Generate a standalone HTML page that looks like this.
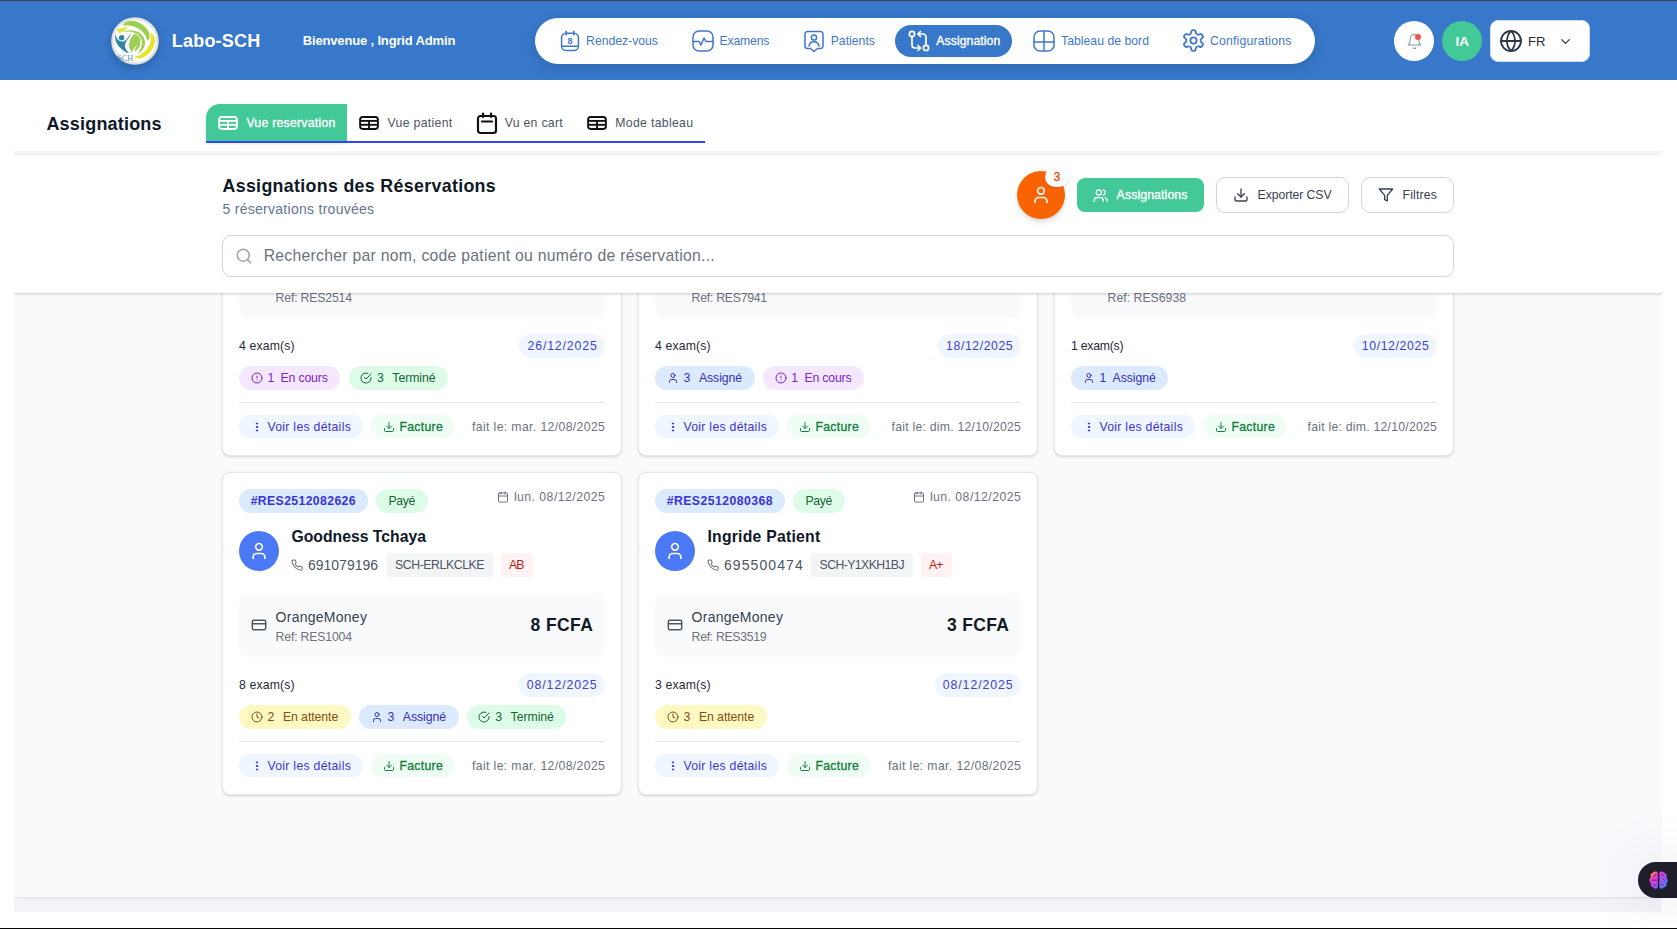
<!DOCTYPE html>
<html lang="fr"><head><meta charset="utf-8"><title>Labo-SCH - Assignations</title>
<style>
html,body{margin:0;padding:0;}
body{width:1677px;height:929px;overflow:hidden;position:relative;background:#fff;font-family:"Liberation Sans", sans-serif;}
.a{position:absolute;display:block;}
.t{position:absolute;white-space:pre;line-height:1;font-family:"Liberation Sans", sans-serif;}
</style></head><body>
<div class="a" style="left:14px;top:151px;width:1648px;height:761px;background:#f3f4f8;"></div>
<div class="a" style="left:14px;top:155px;width:1648px;height:742px;background:#f8fafc;box-shadow:0 2px 3px -2px rgba(0,0,0,.18);"></div>
<div class="a" style="left:0;top:0;width:1677px;height:929px;clip-path:inset(151px 15px 32px 14px)">
<div class="a" style="left:222px;top:133px;width:400px;height:323px;background:#fff;border-radius:8px;border:1px solid #e5e7eb;box-sizing:border-box;box-shadow:0 1px 3px rgba(0,0,0,.10), 0 1px 2px rgba(0,0,0,.06);"></div>
<div class="a" style="left:239.1px;top:254.0px;width:365.8px;height:63.8px;background:#f9fafb;border-radius:10px;"></div>
<span class="t" style="left:275.60px;top:292.00px;font-size:12.25px;color:#6b7280;letter-spacing:-0.174px;">Ref: RES2514</span>
<span class="t" style="left:239.10px;top:340.00px;font-size:12.25px;color:#1f2937;letter-spacing:0.116px;">4 exam(s)</span>
<div class="a" style="left:519.3px;top:334.1px;width:85.6px;height:23.6px;background:#eff6ff;border-radius:12px;"></div>
<span class="t" style="left:527.50px;top:340.00px;font-size:12.25px;color:#3b3fd8;letter-spacing:0.876px;">26/12/2025</span>
<div class="a" style="left:239.1px;top:366.1px;width:101.3px;height:23.6px;background:#f3e8ff;border-radius:12px;"></div>
<svg class="a" style="left:250.7px;top:371.90000000000003px;" width="12" height="12" viewBox="0 0 24 24" fill="none" stroke="#7e22ce" stroke-width="2" stroke-linecap="round" stroke-linejoin="round"><circle cx="12" cy="12" r="10"/><line x1="12" x2="12" y1="8" y2="12"/><line x1="12" x2="12.01" y1="16" y2="16"/></svg>
<span class="t" style="left:267.50px;top:372.00px;font-size:12.25px;color:#7e22ce;">1</span>
<span class="t" style="left:280.60px;top:372.00px;font-size:12.25px;color:#7e22ce;letter-spacing:-0.163px;">En cours</span>
<div class="a" style="left:348.5px;top:366.1px;width:99.69999999999999px;height:23.6px;background:#dcfce7;border-radius:12px;"></div>
<svg class="a" style="left:360.1px;top:371.90000000000003px;" width="12" height="12" viewBox="0 0 24 24" fill="none" stroke="#166534" stroke-width="2" stroke-linecap="round" stroke-linejoin="round"><path d="M22 11.08V12a10 10 0 1 1-5.93-9.14"/><polyline points="22 4 12 14.01 9 11.01"/></svg>
<span class="t" style="left:376.90px;top:372.00px;font-size:12.25px;color:#166534;">3</span>
<span class="t" style="left:392.30px;top:372.00px;font-size:12.25px;color:#166534;letter-spacing:-0.046px;">Terminé</span>
<div class="a" style="left:239.1px;top:401.90000000000003px;width:365.8px;height:1px;background:#e5e7eb;"></div>
<div class="a" style="left:239.1px;top:414.90000000000003px;width:123.9px;height:23.6px;background:#eff6ff;border-radius:12px;"></div>
<svg class="a" style="left:250.7px;top:420.7px;" width="12" height="12" viewBox="0 0 24 24" fill="#3b35d6" stroke="#3b35d6" stroke-width="2" stroke-linecap="round" stroke-linejoin="round"><circle cx="12" cy="5" r="1.3"/><circle cx="12" cy="12" r="1.3"/><circle cx="12" cy="19" r="1.3"/></svg>
<span class="t" style="left:267.40px;top:421.00px;font-size:12.25px;color:#3b35d6;letter-spacing:0.293px;">Voir les détails</span>
<div class="a" style="left:371.3px;top:414.90000000000003px;width:83.9px;height:23.6px;background:#f0fdf4;border-radius:12px;"></div>
<svg class="a" style="left:383.4px;top:420.7px;" width="12" height="12" viewBox="0 0 24 24" fill="none" stroke="#15803d" stroke-width="2" stroke-linecap="round" stroke-linejoin="round"><path d="M21 15v4a2 2 0 0 1-2 2H5a2 2 0 0 1-2-2v-4"/><polyline points="7 10 12 15 17 10"/><line x1="12" x2="12" y1="15" y2="3"/></svg>
<span class="t" style="left:399.40px;top:421.00px;font-size:12.25px;color:#15803d;-webkit-text-stroke:0.35px;letter-spacing:0.295px;">Facture</span>
<span class="t" style="left:472.10px;top:421.00px;font-size:12.25px;color:#6b7280;letter-spacing:0.355px;">fait le: mar. 12/08/2025</span>
<div class="a" style="left:638px;top:133px;width:400px;height:323px;background:#fff;border-radius:8px;border:1px solid #e5e7eb;box-sizing:border-box;box-shadow:0 1px 3px rgba(0,0,0,.10), 0 1px 2px rgba(0,0,0,.06);"></div>
<div class="a" style="left:655.1px;top:254.0px;width:365.8px;height:63.8px;background:#f9fafb;border-radius:10px;"></div>
<span class="t" style="left:691.60px;top:292.00px;font-size:12.25px;color:#6b7280;letter-spacing:-0.247px;">Ref: RES7941</span>
<span class="t" style="left:655.10px;top:340.00px;font-size:12.25px;color:#1f2937;letter-spacing:0.116px;">4 exam(s)</span>
<div class="a" style="left:937.9px;top:334.1px;width:83.0px;height:23.6px;background:#eff6ff;border-radius:12px;"></div>
<span class="t" style="left:946.10px;top:340.00px;font-size:12.25px;color:#3b3fd8;letter-spacing:0.587px;">18/12/2025</span>
<div class="a" style="left:655.1px;top:366.1px;width:99.69999999999999px;height:23.6px;background:#dbeafe;border-radius:12px;"></div>
<svg class="a" style="left:666.7px;top:371.90000000000003px;" width="12" height="12" viewBox="0 0 24 24" fill="none" stroke="#3730b8" stroke-width="2" stroke-linecap="round" stroke-linejoin="round"><path d="M19 21v-2a4 4 0 0 0-4-4H9a4 4 0 0 0-4 4v2"/><circle cx="12" cy="7" r="4"/></svg>
<span class="t" style="left:683.50px;top:372.00px;font-size:12.25px;color:#3730b8;">3</span>
<span class="t" style="left:698.90px;top:372.00px;font-size:12.25px;color:#3730b8;letter-spacing:-0.049px;">Assigné</span>
<div class="a" style="left:762.9px;top:366.1px;width:101.3px;height:23.6px;background:#f3e8ff;border-radius:12px;"></div>
<svg class="a" style="left:774.5px;top:371.90000000000003px;" width="12" height="12" viewBox="0 0 24 24" fill="none" stroke="#7e22ce" stroke-width="2" stroke-linecap="round" stroke-linejoin="round"><circle cx="12" cy="12" r="10"/><line x1="12" x2="12" y1="8" y2="12"/><line x1="12" x2="12.01" y1="16" y2="16"/></svg>
<span class="t" style="left:791.30px;top:372.00px;font-size:12.25px;color:#7e22ce;">1</span>
<span class="t" style="left:804.40px;top:372.00px;font-size:12.25px;color:#7e22ce;letter-spacing:-0.163px;">En cours</span>
<div class="a" style="left:655.1px;top:401.90000000000003px;width:365.8px;height:1px;background:#e5e7eb;"></div>
<div class="a" style="left:655.1px;top:414.90000000000003px;width:123.9px;height:23.6px;background:#eff6ff;border-radius:12px;"></div>
<svg class="a" style="left:666.7px;top:420.7px;" width="12" height="12" viewBox="0 0 24 24" fill="#3b35d6" stroke="#3b35d6" stroke-width="2" stroke-linecap="round" stroke-linejoin="round"><circle cx="12" cy="5" r="1.3"/><circle cx="12" cy="12" r="1.3"/><circle cx="12" cy="19" r="1.3"/></svg>
<span class="t" style="left:683.40px;top:421.00px;font-size:12.25px;color:#3b35d6;letter-spacing:0.293px;">Voir les détails</span>
<div class="a" style="left:787.3px;top:414.90000000000003px;width:83.9px;height:23.6px;background:#f0fdf4;border-radius:12px;"></div>
<svg class="a" style="left:799.4px;top:420.7px;" width="12" height="12" viewBox="0 0 24 24" fill="none" stroke="#15803d" stroke-width="2" stroke-linecap="round" stroke-linejoin="round"><path d="M21 15v4a2 2 0 0 1-2 2H5a2 2 0 0 1-2-2v-4"/><polyline points="7 10 12 15 17 10"/><line x1="12" x2="12" y1="15" y2="3"/></svg>
<span class="t" style="left:815.40px;top:421.00px;font-size:12.25px;color:#15803d;-webkit-text-stroke:0.35px;letter-spacing:0.295px;">Facture</span>
<span class="t" style="left:891.50px;top:421.00px;font-size:12.25px;color:#6b7280;letter-spacing:0.237px;">fait le: dim. 12/10/2025</span>
<div class="a" style="left:1054px;top:133px;width:400px;height:323px;background:#fff;border-radius:8px;border:1px solid #e5e7eb;box-sizing:border-box;box-shadow:0 1px 3px rgba(0,0,0,.10), 0 1px 2px rgba(0,0,0,.06);"></div>
<div class="a" style="left:1071.1px;top:254.0px;width:365.8px;height:63.8px;background:#f9fafb;border-radius:10px;"></div>
<span class="t" style="left:1107.60px;top:292.00px;font-size:12.25px;color:#6b7280;letter-spacing:0.017px;">Ref: RES6938</span>
<span class="t" style="left:1071.10px;top:340.00px;font-size:12.25px;color:#1f2937;letter-spacing:-0.259px;">1 exam(s)</span>
<div class="a" style="left:1353.6px;top:334.1px;width:83.30000000000001px;height:23.6px;background:#eff6ff;border-radius:12px;"></div>
<span class="t" style="left:1361.80px;top:340.00px;font-size:12.25px;color:#3b3fd8;letter-spacing:0.621px;">10/12/2025</span>
<div class="a" style="left:1071.1px;top:366.1px;width:97.39999999999999px;height:23.6px;background:#dbeafe;border-radius:12px;"></div>
<svg class="a" style="left:1082.6999999999998px;top:371.90000000000003px;" width="12" height="12" viewBox="0 0 24 24" fill="none" stroke="#3730b8" stroke-width="2" stroke-linecap="round" stroke-linejoin="round"><path d="M19 21v-2a4 4 0 0 0-4-4H9a4 4 0 0 0-4 4v2"/><circle cx="12" cy="7" r="4"/></svg>
<span class="t" style="left:1099.50px;top:372.00px;font-size:12.25px;color:#3730b8;">1</span>
<span class="t" style="left:1112.60px;top:372.00px;font-size:12.25px;color:#3730b8;letter-spacing:-0.049px;">Assigné</span>
<div class="a" style="left:1071.1px;top:401.90000000000003px;width:365.8px;height:1px;background:#e5e7eb;"></div>
<div class="a" style="left:1071.1px;top:414.90000000000003px;width:123.9px;height:23.6px;background:#eff6ff;border-radius:12px;"></div>
<svg class="a" style="left:1082.7px;top:420.7px;" width="12" height="12" viewBox="0 0 24 24" fill="#3b35d6" stroke="#3b35d6" stroke-width="2" stroke-linecap="round" stroke-linejoin="round"><circle cx="12" cy="5" r="1.3"/><circle cx="12" cy="12" r="1.3"/><circle cx="12" cy="19" r="1.3"/></svg>
<span class="t" style="left:1099.40px;top:421.00px;font-size:12.25px;color:#3b35d6;letter-spacing:0.293px;">Voir les détails</span>
<div class="a" style="left:1203.3px;top:414.90000000000003px;width:83.9px;height:23.6px;background:#f0fdf4;border-radius:12px;"></div>
<svg class="a" style="left:1215.4px;top:420.7px;" width="12" height="12" viewBox="0 0 24 24" fill="none" stroke="#15803d" stroke-width="2" stroke-linecap="round" stroke-linejoin="round"><path d="M21 15v4a2 2 0 0 1-2 2H5a2 2 0 0 1-2-2v-4"/><polyline points="7 10 12 15 17 10"/><line x1="12" x2="12" y1="15" y2="3"/></svg>
<span class="t" style="left:1231.40px;top:421.00px;font-size:12.25px;color:#15803d;-webkit-text-stroke:0.35px;letter-spacing:0.295px;">Facture</span>
<span class="t" style="left:1307.50px;top:421.00px;font-size:12.25px;color:#6b7280;letter-spacing:0.237px;">fait le: dim. 12/10/2025</span>
<div class="a" style="left:222px;top:472px;width:400px;height:323px;background:#fff;border-radius:8px;border:1px solid #e5e7eb;box-sizing:border-box;box-shadow:0 1px 3px rgba(0,0,0,.10), 0 1px 2px rgba(0,0,0,.06);"></div>
<div class="a" style="left:238.9px;top:489.0px;width:129.1px;height:23.9px;background:#dbeafe;border-radius:12px;"></div>
<span class="t" style="left:250.70px;top:495.00px;font-size:12.25px;color:#3b33d6;font-weight:700;letter-spacing:0.366px;">#RES2512082626</span>
<div class="a" style="left:375.9px;top:489.0px;width:52.2px;height:23.9px;background:#dcfce7;border-radius:12px;"></div>
<span class="t" style="left:388.40px;top:495.00px;font-size:12.25px;color:#166534;letter-spacing:-0.341px;">Payé</span>
<svg class="a" style="left:496.9px;top:490.7px;" width="12" height="12" viewBox="0 0 24 24" fill="none" stroke="#6b7280" stroke-width="2" stroke-linecap="round" stroke-linejoin="round"><rect width="18" height="18" x="3" y="4" rx="2" ry="2"/><line x1="16" x2="16" y1="2" y2="6"/><line x1="8" x2="8" y1="2" y2="6"/><line x1="3" x2="21" y1="10" y2="10"/></svg>
<span class="t" style="left:513.90px;top:491.00px;font-size:12.25px;color:#6b7280;letter-spacing:0.459px;">lun. 08/12/2025</span>
<div class="a" style="left:238.9px;top:530.9px;width:40.2px;height:40.2px;background:#4b78f5;border-radius:20.1px;"></div>
<svg class="a" style="left:249.1px;top:541.0px;" width="20" height="20" viewBox="0 0 24 24" fill="none" stroke="#fff" stroke-width="2" stroke-linecap="round" stroke-linejoin="round"><path d="M19 21v-2a4 4 0 0 0-4-4H9a4 4 0 0 0-4 4v2"/><circle cx="12" cy="7" r="4"/></svg>
<span class="t" style="left:291.40px;top:529.00px;font-size:15.75px;color:#111827;font-weight:700;letter-spacing:0.007px;">Goodness Tchaya</span>
<svg class="a" style="left:291.0px;top:558.8px;" width="12.2" height="12.2" viewBox="0 0 24 24" fill="none" stroke="#6b7280" stroke-width="2" stroke-linecap="round" stroke-linejoin="round"><path d="M22 16.92v3a2 2 0 0 1-2.18 2 19.79 19.79 0 0 1-8.63-3.07 19.5 19.5 0 0 1-6-6 19.79 19.79 0 0 1-3.07-8.67A2 2 0 0 1 4.11 2h3a2 2 0 0 1 2 1.72 12.84 12.84 0 0 0 .7 2.81 2 2 0 0 1-.45 2.11L8.09 9.91a16 16 0 0 0 6 6l1.27-1.27a2 2 0 0 1 2.11-.45 12.84 12.84 0 0 0 2.81.7A2 2 0 0 1 22 16.92z"/></svg>
<span class="t" style="left:307.90px;top:558.00px;font-size:14px;color:#4b5563;letter-spacing:0.015px;">691079196</span>
<div class="a" style="left:386.7px;top:553.0px;width:106.7px;height:24px;background:#f3f4f6;border-radius:4px;"></div>
<span class="t" style="left:395.00px;top:559.00px;font-size:12.25px;color:#4b5563;letter-spacing:-0.405px;">SCH-ERLKCLKE</span>
<div class="a" style="left:501.09999999999997px;top:553.0px;width:31.6px;height:24px;background:#fef2f2;border-radius:4px;"></div>
<span class="t" style="left:508.90px;top:559.00px;font-size:12.25px;color:#b91c1c;letter-spacing:-0.844px;">AB</span>
<div class="a" style="left:239.1px;top:593.0px;width:365.8px;height:63.8px;background:#f9fafb;border-radius:10px;"></div>
<svg class="a" style="left:250.9px;top:616.7px;" width="16" height="16" viewBox="0 0 24 24" fill="none" stroke="#4b5563" stroke-width="2.2" stroke-linecap="round" stroke-linejoin="round"><rect width="20" height="14" x="2" y="5" rx="2"/><line x1="2" x2="22" y1="10" y2="10"/></svg>
<span class="t" style="left:275.60px;top:610.00px;font-size:14px;color:#374151;letter-spacing:0.258px;">OrangeMoney</span>
<span class="t" style="left:530.60px;top:617.00px;font-size:17.5px;color:#111827;font-weight:700;letter-spacing:0.381px;">8 FCFA</span>
<span class="t" style="left:275.60px;top:631.00px;font-size:12.25px;color:#6b7280;letter-spacing:-0.174px;">Ref: RES1004</span>
<span class="t" style="left:239.10px;top:679.00px;font-size:12.25px;color:#1f2937;letter-spacing:0.116px;">8 exam(s)</span>
<div class="a" style="left:518.5px;top:673.1px;width:86.4px;height:23.6px;background:#eff6ff;border-radius:12px;"></div>
<span class="t" style="left:526.70px;top:679.00px;font-size:12.25px;color:#3b3fd8;letter-spacing:0.965px;">08/12/2025</span>
<div class="a" style="left:239.1px;top:705.1px;width:111.79999999999998px;height:23.6px;background:#fef9c3;border-radius:12px;"></div>
<svg class="a" style="left:250.7px;top:710.9px;" width="12" height="12" viewBox="0 0 24 24" fill="none" stroke="#854d0e" stroke-width="2" stroke-linecap="round" stroke-linejoin="round"><circle cx="12" cy="12" r="10"/><polyline points="12 6 12 12 16 14"/></svg>
<span class="t" style="left:267.50px;top:711.00px;font-size:12.25px;color:#854d0e;">2</span>
<span class="t" style="left:282.90px;top:711.00px;font-size:12.25px;color:#854d0e;letter-spacing:-0.051px;">En attente</span>
<div class="a" style="left:359.0px;top:705.1px;width:99.69999999999999px;height:23.6px;background:#dbeafe;border-radius:12px;"></div>
<svg class="a" style="left:370.6px;top:710.9px;" width="12" height="12" viewBox="0 0 24 24" fill="none" stroke="#3730b8" stroke-width="2" stroke-linecap="round" stroke-linejoin="round"><path d="M19 21v-2a4 4 0 0 0-4-4H9a4 4 0 0 0-4 4v2"/><circle cx="12" cy="7" r="4"/></svg>
<span class="t" style="left:387.40px;top:711.00px;font-size:12.25px;color:#3730b8;">3</span>
<span class="t" style="left:402.80px;top:711.00px;font-size:12.25px;color:#3730b8;letter-spacing:-0.049px;">Assigné</span>
<div class="a" style="left:466.8px;top:705.1px;width:99.69999999999999px;height:23.6px;background:#dcfce7;border-radius:12px;"></div>
<svg class="a" style="left:478.40000000000003px;top:710.9px;" width="12" height="12" viewBox="0 0 24 24" fill="none" stroke="#166534" stroke-width="2" stroke-linecap="round" stroke-linejoin="round"><path d="M22 11.08V12a10 10 0 1 1-5.93-9.14"/><polyline points="22 4 12 14.01 9 11.01"/></svg>
<span class="t" style="left:495.20px;top:711.00px;font-size:12.25px;color:#166534;">3</span>
<span class="t" style="left:510.60px;top:711.00px;font-size:12.25px;color:#166534;letter-spacing:-0.046px;">Terminé</span>
<div class="a" style="left:239.1px;top:740.9000000000001px;width:365.8px;height:1px;background:#e5e7eb;"></div>
<div class="a" style="left:239.1px;top:753.9000000000001px;width:123.9px;height:23.6px;background:#eff6ff;border-radius:12px;"></div>
<svg class="a" style="left:250.7px;top:759.7px;" width="12" height="12" viewBox="0 0 24 24" fill="#3b35d6" stroke="#3b35d6" stroke-width="2" stroke-linecap="round" stroke-linejoin="round"><circle cx="12" cy="5" r="1.3"/><circle cx="12" cy="12" r="1.3"/><circle cx="12" cy="19" r="1.3"/></svg>
<span class="t" style="left:267.40px;top:760.00px;font-size:12.25px;color:#3b35d6;letter-spacing:0.293px;">Voir les détails</span>
<div class="a" style="left:371.3px;top:753.9000000000001px;width:83.9px;height:23.6px;background:#f0fdf4;border-radius:12px;"></div>
<svg class="a" style="left:383.4px;top:759.7px;" width="12" height="12" viewBox="0 0 24 24" fill="none" stroke="#15803d" stroke-width="2" stroke-linecap="round" stroke-linejoin="round"><path d="M21 15v4a2 2 0 0 1-2 2H5a2 2 0 0 1-2-2v-4"/><polyline points="7 10 12 15 17 10"/><line x1="12" x2="12" y1="15" y2="3"/></svg>
<span class="t" style="left:399.40px;top:760.00px;font-size:12.25px;color:#15803d;-webkit-text-stroke:0.35px;letter-spacing:0.295px;">Facture</span>
<span class="t" style="left:472.10px;top:760.00px;font-size:12.25px;color:#6b7280;letter-spacing:0.355px;">fait le: mar. 12/08/2025</span>
<div class="a" style="left:638px;top:472px;width:400px;height:323px;background:#fff;border-radius:8px;border:1px solid #e5e7eb;box-sizing:border-box;box-shadow:0 1px 3px rgba(0,0,0,.10), 0 1px 2px rgba(0,0,0,.06);"></div>
<div class="a" style="left:654.9px;top:489.0px;width:130.2px;height:23.9px;background:#dbeafe;border-radius:12px;"></div>
<span class="t" style="left:666.70px;top:495.00px;font-size:12.25px;color:#3b33d6;font-weight:700;letter-spacing:0.451px;">#RES2512080368</span>
<div class="a" style="left:793.0px;top:489.0px;width:52.2px;height:23.9px;background:#dcfce7;border-radius:12px;"></div>
<span class="t" style="left:805.50px;top:495.00px;font-size:12.25px;color:#166534;letter-spacing:-0.341px;">Payé</span>
<svg class="a" style="left:912.9px;top:490.7px;" width="12" height="12" viewBox="0 0 24 24" fill="none" stroke="#6b7280" stroke-width="2" stroke-linecap="round" stroke-linejoin="round"><rect width="18" height="18" x="3" y="4" rx="2" ry="2"/><line x1="16" x2="16" y1="2" y2="6"/><line x1="8" x2="8" y1="2" y2="6"/><line x1="3" x2="21" y1="10" y2="10"/></svg>
<span class="t" style="left:929.90px;top:491.00px;font-size:12.25px;color:#6b7280;letter-spacing:0.459px;">lun. 08/12/2025</span>
<div class="a" style="left:654.9px;top:530.9px;width:40.2px;height:40.2px;background:#4b78f5;border-radius:20.1px;"></div>
<svg class="a" style="left:665.1px;top:541.0px;" width="20" height="20" viewBox="0 0 24 24" fill="none" stroke="#fff" stroke-width="2" stroke-linecap="round" stroke-linejoin="round"><path d="M19 21v-2a4 4 0 0 0-4-4H9a4 4 0 0 0-4 4v2"/><circle cx="12" cy="7" r="4"/></svg>
<span class="t" style="left:707.40px;top:529.00px;font-size:15.75px;color:#111827;font-weight:700;letter-spacing:0.244px;">Ingride Patient</span>
<svg class="a" style="left:707.0px;top:558.8px;" width="12.2" height="12.2" viewBox="0 0 24 24" fill="none" stroke="#6b7280" stroke-width="2" stroke-linecap="round" stroke-linejoin="round"><path d="M22 16.92v3a2 2 0 0 1-2.18 2 19.79 19.79 0 0 1-8.63-3.07 19.5 19.5 0 0 1-6-6 19.79 19.79 0 0 1-3.07-8.67A2 2 0 0 1 4.11 2h3a2 2 0 0 1 2 1.72 12.84 12.84 0 0 0 .7 2.81 2 2 0 0 1-.45 2.11L8.09 9.91a16 16 0 0 0 6 6l1.27-1.27a2 2 0 0 1 2.11-.45 12.84 12.84 0 0 0 2.81.7A2 2 0 0 1 22 16.92z"/></svg>
<span class="t" style="left:723.90px;top:558.00px;font-size:14px;color:#4b5563;letter-spacing:1.090px;">695500474</span>
<div class="a" style="left:811.3px;top:553.0px;width:102.2px;height:24px;background:#f3f4f6;border-radius:4px;"></div>
<span class="t" style="left:819.60px;top:559.00px;font-size:12.25px;color:#4b5563;letter-spacing:-0.567px;">SCH-Y1XKH1BJ</span>
<div class="a" style="left:921.2px;top:553.0px;width:30.6px;height:24px;background:#fef2f2;border-radius:4px;"></div>
<span class="t" style="left:929.00px;top:559.00px;font-size:12.25px;color:#b91c1c;letter-spacing:-0.828px;">A+</span>
<div class="a" style="left:655.1px;top:593.0px;width:365.8px;height:63.8px;background:#f9fafb;border-radius:10px;"></div>
<svg class="a" style="left:666.9px;top:616.7px;" width="16" height="16" viewBox="0 0 24 24" fill="none" stroke="#4b5563" stroke-width="2.2" stroke-linecap="round" stroke-linejoin="round"><rect width="20" height="14" x="2" y="5" rx="2"/><line x1="2" x2="22" y1="10" y2="10"/></svg>
<span class="t" style="left:691.60px;top:610.00px;font-size:14px;color:#374151;letter-spacing:0.258px;">OrangeMoney</span>
<span class="t" style="left:947.10px;top:617.00px;font-size:17.5px;color:#111827;font-weight:700;letter-spacing:0.281px;">3 FCFA</span>
<span class="t" style="left:691.60px;top:631.00px;font-size:12.25px;color:#6b7280;letter-spacing:-0.301px;">Ref: RES3519</span>
<span class="t" style="left:655.10px;top:679.00px;font-size:12.25px;color:#1f2937;letter-spacing:0.141px;">3 exam(s)</span>
<div class="a" style="left:934.5px;top:673.1px;width:86.4px;height:23.6px;background:#eff6ff;border-radius:12px;"></div>
<span class="t" style="left:942.70px;top:679.00px;font-size:12.25px;color:#3b3fd8;letter-spacing:0.965px;">08/12/2025</span>
<div class="a" style="left:655.1px;top:705.1px;width:111.79999999999998px;height:23.6px;background:#fef9c3;border-radius:12px;"></div>
<svg class="a" style="left:666.7px;top:710.9px;" width="12" height="12" viewBox="0 0 24 24" fill="none" stroke="#854d0e" stroke-width="2" stroke-linecap="round" stroke-linejoin="round"><circle cx="12" cy="12" r="10"/><polyline points="12 6 12 12 16 14"/></svg>
<span class="t" style="left:683.50px;top:711.00px;font-size:12.25px;color:#854d0e;">3</span>
<span class="t" style="left:698.90px;top:711.00px;font-size:12.25px;color:#854d0e;letter-spacing:-0.051px;">En attente</span>
<div class="a" style="left:655.1px;top:740.9000000000001px;width:365.8px;height:1px;background:#e5e7eb;"></div>
<div class="a" style="left:655.1px;top:753.9000000000001px;width:123.9px;height:23.6px;background:#eff6ff;border-radius:12px;"></div>
<svg class="a" style="left:666.7px;top:759.7px;" width="12" height="12" viewBox="0 0 24 24" fill="#3b35d6" stroke="#3b35d6" stroke-width="2" stroke-linecap="round" stroke-linejoin="round"><circle cx="12" cy="5" r="1.3"/><circle cx="12" cy="12" r="1.3"/><circle cx="12" cy="19" r="1.3"/></svg>
<span class="t" style="left:683.40px;top:760.00px;font-size:12.25px;color:#3b35d6;letter-spacing:0.293px;">Voir les détails</span>
<div class="a" style="left:787.3px;top:753.9000000000001px;width:83.9px;height:23.6px;background:#f0fdf4;border-radius:12px;"></div>
<svg class="a" style="left:799.4px;top:759.7px;" width="12" height="12" viewBox="0 0 24 24" fill="none" stroke="#15803d" stroke-width="2" stroke-linecap="round" stroke-linejoin="round"><path d="M21 15v4a2 2 0 0 1-2 2H5a2 2 0 0 1-2-2v-4"/><polyline points="7 10 12 15 17 10"/><line x1="12" x2="12" y1="15" y2="3"/></svg>
<span class="t" style="left:815.40px;top:760.00px;font-size:12.25px;color:#15803d;-webkit-text-stroke:0.35px;letter-spacing:0.295px;">Facture</span>
<span class="t" style="left:888.10px;top:760.00px;font-size:12.25px;color:#6b7280;letter-spacing:0.355px;">fait le: mar. 12/08/2025</span>
<div class="a" style="left:14px;top:151px;width:1648px;height:4px;background:#f3f4f8;"></div>
<div class="a" style="left:14px;top:155px;width:1648px;height:138px;background:#fff;box-shadow:0 1px 3px rgba(0,0,0,.13), 0 1px 2px rgba(0,0,0,.06);"></div>
<span class="t" style="left:222.50px;top:178.00px;font-size:17.8px;color:#111827;font-weight:700;letter-spacing:0.334px;">Assignations des Réservations</span>
<span class="t" style="left:222.50px;top:202.00px;font-size:14px;color:#64748b;letter-spacing:0.276px;">5 réservations trouvées</span>
<div class="a" style="left:1017px;top:171px;width:48px;height:48px;background:#fa6400;border-radius:24px;box-shadow:0 4px 6px -1px rgba(0,0,0,.13), 0 2px 4px -2px rgba(0,0,0,.10);"></div>
<svg class="a" style="left:1031px;top:185px;" width="20" height="20" viewBox="0 0 24 24" fill="none" stroke="#fff" stroke-width="2" stroke-linecap="round" stroke-linejoin="round"><path d="M19 21v-2a4 4 0 0 0-4-4H9a4 4 0 0 0-4 4v2"/><circle cx="12" cy="7" r="4"/></svg>
<div class="a" style="left:1045px;top:166.6px;width:24.2px;height:20.4px;background:#fff;border-radius:10.2px;box-shadow:0 1px 3px rgba(0,0,0,.15);"></div>
<span class="t" style="left:1053.49px;top:171.00px;font-size:12.25px;color:#e8500f;-webkit-text-stroke:0.35px;">3</span>
<div class="a" style="left:1077px;top:178px;width:127px;height:34px;background:#43c998;border-radius:8px;"></div>
<svg class="a" style="left:1092.9px;top:187.5px;" width="15.5" height="15.5" viewBox="0 0 24 24" fill="none" stroke="#fff" stroke-width="2" stroke-linecap="round" stroke-linejoin="round"><path d="M16 21v-2a4 4 0 0 0-4-4H6a4 4 0 0 0-4 4v2"/><circle cx="9" cy="7" r="4"/><path d="M22 21v-2a4 4 0 0 0-3-3.87"/><path d="M16 3.13a4 4 0 0 1 0 7.75"/></svg>
<span class="t" style="left:1116.60px;top:189.00px;font-size:12.25px;color:#fff;-webkit-text-stroke:0.35px;letter-spacing:0.121px;">Assignations</span>
<div class="a" style="left:1216px;top:177px;width:132.6px;height:36px;background:#fff;border-radius:9px;border:1px solid #d1d5db;box-sizing:border-box;"></div>
<svg class="a" style="left:1233px;top:187px;" width="16" height="16" viewBox="0 0 24 24" fill="none" stroke="#374151" stroke-width="2" stroke-linecap="round" stroke-linejoin="round"><path d="M21 15v4a2 2 0 0 1-2 2H5a2 2 0 0 1-2-2v-4"/><polyline points="7 10 12 15 17 10"/><line x1="12" x2="12" y1="15" y2="3"/></svg>
<span class="t" style="left:1257.60px;top:189.00px;font-size:12.25px;color:#374151;letter-spacing:-0.081px;">Exporter CSV</span>
<div class="a" style="left:1361.3px;top:177px;width:92.6px;height:36px;background:#fff;border-radius:9px;border:1px solid #d1d5db;box-sizing:border-box;"></div>
<svg class="a" style="left:1378px;top:187px;" width="16" height="16" viewBox="0 0 24 24" fill="none" stroke="#374151" stroke-width="2" stroke-linecap="round" stroke-linejoin="round"><polygon points="22 3 2 3 10 12.46 10 19 14 21 14 12.46 22 3"/></svg>
<span class="t" style="left:1402.50px;top:189.00px;font-size:12.25px;color:#374151;letter-spacing:0.190px;">Filtres</span>
<div class="a" style="left:222px;top:235px;width:1232px;height:42px;background:#fff;border-radius:9px;border:1px solid #d1d5db;box-sizing:border-box;"></div>
<svg class="a" style="left:235px;top:247.3px;" width="18" height="18" viewBox="0 0 24 24" fill="none" stroke="#9ca3af" stroke-width="2" stroke-linecap="round" stroke-linejoin="round"><circle cx="11" cy="11" r="8"/><path d="m21 21-4.3-4.3"/></svg>
<span class="t" style="left:263.70px;top:248.00px;font-size:15.75px;color:#6b7280;letter-spacing:0.269px;">Rechercher par nom, code patient ou numéro de réservation...</span>
</div>
<div class="a" style="left:0px;top:80px;width:1677px;height:71px;background:#fff;"></div>
<span class="t" style="left:46.40px;top:115.00px;font-size:18px;color:#0f172a;font-weight:700;letter-spacing:0.197px;">Assignations</span>
<div class="a" style="left:206px;top:104px;width:141px;height:38px;background:#43c998;border-radius:14px 0 0 0;box-shadow:0 2px 4px rgba(0,0,0,.08);"></div>
<svg class="a" style="left:216.05px;top:113.5px" width="24" height="18" viewBox="216.05 113.5 24 18" fill="none" stroke="#fff" stroke-width="1.9" stroke-linecap="butt"><rect x="219.15" y="116.55" width="17.8" height="11.9" rx="2.6"/><line x1="219.15" y1="120.39999999999999" x2="236.95000000000002" y2="120.39999999999999"/><line x1="219.15" y1="124.3" x2="236.95000000000002" y2="124.3"/><line x1="228.05" y1="120.39999999999999" x2="228.05" y2="128.45"/></svg>
<span class="t" style="left:246.40px;top:117.00px;font-size:12.25px;color:#fff;-webkit-text-stroke:0.35px;letter-spacing:0.254px;">Vue reservation</span>
<svg class="a" style="left:356.9px;top:113.9px" width="24" height="18" viewBox="356.9 113.9 24 18" fill="none" stroke="#111" stroke-width="1.9" stroke-linecap="butt"><rect x="360.0" y="116.95" width="17.8" height="11.9" rx="2.6"/><line x1="360.0" y1="120.8" x2="377.8" y2="120.8"/><line x1="360.0" y1="124.7" x2="377.8" y2="124.7"/><line x1="368.9" y1="120.8" x2="368.9" y2="128.85"/></svg>
<span class="t" style="left:387.60px;top:117.00px;font-size:12.25px;color:#4b5563;letter-spacing:0.307px;">Vue patient</span>
<svg class="a" style="left:475px;top:110.5px;" width="24" height="24" viewBox="0 0 24 24" fill="none" stroke="#111" stroke-width="2.2" stroke-linecap="round" stroke-linejoin="round"><rect x="3" y="5" width="18" height="17" rx="2.5"/><line x1="8" y1="2.5" x2="8" y2="6"/><line x1="16" y1="2.5" x2="16" y2="6"/><line x1="7" y1="10.5" x2="17" y2="10.5"/></svg>
<span class="t" style="left:504.70px;top:117.00px;font-size:12.25px;color:#4b5563;letter-spacing:0.290px;">Vu en cart</span>
<svg class="a" style="left:584.9px;top:113.9px" width="24" height="18" viewBox="584.9 113.9 24 18" fill="none" stroke="#111" stroke-width="1.9" stroke-linecap="butt"><rect x="588.0" y="116.95" width="17.8" height="11.9" rx="2.6"/><line x1="588.0" y1="120.8" x2="605.8" y2="120.8"/><line x1="588.0" y1="124.7" x2="605.8" y2="124.7"/><line x1="596.9" y1="120.8" x2="596.9" y2="128.85"/></svg>
<span class="t" style="left:615.30px;top:117.00px;font-size:12.25px;color:#4b5563;letter-spacing:0.314px;">Mode tableau</span>
<div class="a" style="left:206px;top:141px;width:499px;height:2px;background:#2f46ee;"></div>
<div class="a" style="left:0px;top:0px;width:1677px;height:80px;background:#3778cb;"></div>
<div class="a" style="left:0px;top:0px;width:1677px;height:1px;background:#4a4139;"></div>
<svg class="a" style="left:110.95px;top:16.5px;filter:drop-shadow(0 3px 4px rgba(0,0,0,.22))" width="48" height="48" viewBox="0 0 48 48">
<circle cx="24" cy="24" r="22.5" fill="#fff" stroke="#e2e2e2" stroke-width="2.6"/>
<path d="M11.6 8.600C13 6.300 14.500 5.200 15.900 4.600C18.500 3.700 21 3.700 23.400 4C26.500 4.600 29.300 5.900 31.600 7.700C34 9.500 36 11.700 37.400 14.200C38.400 16 38.800 17.700 38.700 19.400C38.600 21.200 37.800 22.800 36.400 24C36 21.600 35 19.500 33.800 17.700C32.600 15.800 31 14.100 29.200 12.800C27.400 11.500 25.400 10.500 23.300 9.800C21.400 9.200 19.500 8.800 17.600 8.600C15.600 8.400 13.600 8.400 11.600 8.600Z" fill="#9fcf52"/>
<path d="M5.700 12.600L17.600 9.500C16.500 10.300 15.600 11.200 14.800 12.200C12.400 13.300 10.400 14.700 8.600 16.500Z" fill="#e8e42e"/>
<path d="M10.600 14.900C13.300 13.700 16.100 13.200 19 13.300C21.900 13.300 24.700 13.800 27.100 14.900C29.500 16.200 31.500 18.100 32.700 20.500C33.700 22.400 34.100 24.500 34 26.700C33.800 28.900 32.900 31.100 31.500 33C30.300 34.600 28.800 36 27.100 37C27.900 35.700 28.500 34.400 29 33C29.900 31 30.600 28.900 30.900 26.700C31 24.700 30.500 22.800 29.600 21.100C28.600 19.300 27.100 17.800 25.200 16.800C23.300 15.700 21.200 14.900 19 14.600C16.900 14.300 14.800 14.400 12.700 14.800Z" fill="#9fcf52"/>
<path d="M23.400 16.800C21.300 18.700 19.800 21 19 23.600C18.400 25.200 18.100 26.900 18.100 28.600C18.200 31.100 19.200 33.500 20.900 35.500C21.500 33 23 30.200 26.500 27.700C24.700 29.900 23.800 32.100 23.400 34.500C24.600 34 25.600 33.300 26.500 32.400C28 30.800 29 28.800 29.300 26.700C29.600 24.600 29.300 22.500 28.400 20.500C27.300 18.800 25.500 17.500 23.400 16.800Z" fill="#9fcf52"/>
<path d="M39.400 15.200C41.500 16.500 42.900 18.300 43.600 20.400C44.200 22.500 44.200 24.700 43.600 26.800C42.900 29.600 41.600 32.200 39.800 34.400C37.900 36.700 35.600 38.700 32.900 40.100C31.200 41 29.400 41.500 27.600 41.400C26.100 41.300 24.700 40.600 23.700 39.400C25.300 39.300 26.900 38.900 28.400 38.200C30.600 37.100 32.600 35.600 34.300 33.800C36 32 37.400 29.900 38.400 27.700C39.300 25.700 39.800 23.600 39.800 21.500C39.800 19.400 39.600 17.300 39.400 15.200Z" fill="#e8e42e"/>
<circle cx="10.600" cy="20.700" r="2.700" fill="#2f86a9"/>
<path d="M4.300 16.800C4 19.100 4.100 21.400 4.600 23.600C5.300 25.900 6.600 28.100 8.400 29.900C10.200 31.900 12.300 33.600 14.600 34.900C15.700 35.500 16.900 35.900 18.100 36.100C16.600 34.800 15.400 33.300 14.600 31.700C14.100 30.500 13.900 29.200 14 28C14.200 26.700 14.600 25.400 15.300 24.300C16.200 22.800 17.300 21.300 18.400 19.900C19.100 18.600 19.500 17.200 19.600 15.800C18.900 17.500 18 19.100 17.100 20.500C16.100 21.900 14.800 23.100 13.400 24C12.500 24.500 11.600 24.700 10.600 24.600C9.500 24.400 8.400 24 7.500 23.300C6.700 22.500 6 21.500 5.600 20.500C5 19.300 4.600 18.100 4.300 16.800Z" fill="#2f86a9"/>
<text x="6.600" y="43.500" font-family="Liberation Serif, serif" font-size="8" fill="#2f86a9" opacity=".85">SCH</text>
</svg>
<span class="t" style="left:171.80px;top:32.00px;font-size:18px;color:#fff;font-weight:700;letter-spacing:0.200px;">Labo-SCH</span>
<span class="t" style="left:302.70px;top:34.00px;font-size:13px;color:#fff;font-weight:700;letter-spacing:-0.155px;">Bienvenue , Ingrid Admin</span>
<div class="a" style="left:535px;top:18px;width:780px;height:46px;background:#fff;border-radius:23px;box-shadow:0 4px 14px rgba(0,0,0,.14);"></div>
<svg class="a" style="left:558px;top:28px" width="24" height="26" viewBox="558 28 24 26" fill="none" stroke="#3f78cb" stroke-width="1.5" stroke-linecap="round"><rect x="561.55" y="33.25" width="16.9" height="17.3" rx="4.6"/><line x1="566.2" y1="31.35" x2="566.2" y2="35"/><line x1="573.8" y1="31.35" x2="573.8" y2="35"/><line x1="562" y1="46.2" x2="578" y2="46.2"/><text x="570" y="43.9" font-family="Liberation Sans" font-size="9.2" font-weight="700" text-anchor="middle" fill="#3f78cb" stroke="none">8</text></svg>
<span class="t" style="left:586.10px;top:35.00px;font-size:12.25px;color:#3f78cb;letter-spacing:-0.029px;">Rendez-vous</span>
<svg class="a" style="left:690.8px;top:28.8px;" width="24" height="24" viewBox="0 0 24 24" fill="none" stroke="#3f78cb" stroke-width="1.5" stroke-linecap="round" stroke-linejoin="round"><rect x="2" y="2" width="20" height="20" rx="6"/><path d="M2 12.5h6l2 3.5 3-7 2 3.5h7"/></svg>
<span class="t" style="left:719.50px;top:35.00px;font-size:12.25px;color:#3f78cb;letter-spacing:-0.180px;">Examens</span>
<svg class="a" style="left:802px;top:28.8px;" width="24" height="24" viewBox="0 0 24 24" fill="none" stroke="#3f78cb" stroke-width="1.5" stroke-linecap="round" stroke-linejoin="round"><path d="M5.5 2.5h13a2.5 2.5 0 0 1 2.5 2.5v12a2.5 2.5 0 0 1-2.5 2.5h-3l-3.5 3-3.500-3h-3A2.5 2.500 0 0 1 3 17V5a2.5 2.5 0 0 1 2.5-2.500z"/><circle cx="12" cy="8.500" r="2.600"/><path d="M7 17c.5-3 2.500-4.300 5-4.300s4.500 1.300 5 4.300"/></svg>
<span class="t" style="left:830.70px;top:35.00px;font-size:12.25px;color:#3f78cb;">Patients</span>
<div class="a" style="left:895px;top:25px;width:117px;height:32px;background:#3778cb;border-radius:16px;"></div>
<svg class="a" style="left:907px;top:29px;" width="24" height="24" viewBox="0 0 24 24" fill="none" stroke="#fff" stroke-width="1.7" stroke-linecap="round" stroke-linejoin="round"><circle cx="5" cy="5" r="2.600"/><circle cx="19" cy="19" r="2.600"/><path d="M5 8v8a3 3 0 0 0 3 3h5.500"/><path d="M11 16.500l2.500 2.500-2.500 2.500"/><path d="M19 16V8a3 3 0 0 0-3-3h-5"/><path d="M13.500 2.500L11 5l2.500 2.500"/></svg>
<span class="t" style="left:936.30px;top:35.00px;font-size:12.25px;color:#fff;-webkit-text-stroke:0.35px;letter-spacing:0.056px;">Assignation</span>
<svg class="a" style="left:1031.8px;top:28.7px;" width="24" height="24" viewBox="0 0 24 24" fill="none" stroke="#3f78cb" stroke-width="1.5" stroke-linecap="round" stroke-linejoin="round"><rect x="2" y="2" width="20" height="20" rx="6"/><line x1="12" y1="2" x2="12" y2="22"/><line x1="2" y1="13" x2="22" y2="13"/></svg>
<span class="t" style="left:1061.00px;top:35.00px;font-size:12.25px;color:#3f78cb;letter-spacing:0.009px;">Tableau de bord</span>
<svg class="a" style="left:1181.3px;top:28.3px;" width="25" height="25" viewBox="0 0 24 24" fill="none" stroke="#3f78cb" stroke-width="1.7" stroke-linecap="round" stroke-linejoin="round"><path d="M12.22 2h-.44a2 2 0 0 0-2 2v.18a2 2 0 0 1-1 1.73l-.43.25a2 2 0 0 1-2 0l-.15-.08a2 2 0 0 0-2.73.73l-.22.38a2 2 0 0 0 .73 2.73l.15.1a2 2 0 0 1 1 1.72v.51a2 2 0 0 1-1 1.74l-.15.09a2 2 0 0 0-.73 2.73l.22.38a2 2 0 0 0 2.73.73l.15-.08a2 2 0 0 1 2 0l.43.25a2 2 0 0 1 1 1.73V20a2 2 0 0 0 2 2h.44a2 2 0 0 0 2-2v-.18a2 2 0 0 1 1-1.73l.43-.25a2 2 0 0 1 2 0l.15.08a2 2 0 0 0 2.73-.73l.22-.39a2 2 0 0 0-.73-2.73l-.15-.08a2 2 0 0 1-1-1.74v-.5a2 2 0 0 1 1-1.74l.15-.09a2 2 0 0 0 .73-2.73l-.22-.38a2 2 0 0 0-2.73-.73l-.15.08a2 2 0 0 1-2 0l-.43-.25a2 2 0 0 1-1-1.73V4a2 2 0 0 0-2-2z"/><circle cx="12" cy="12" r="3"/></svg>
<span class="t" style="left:1210.00px;top:35.00px;font-size:12.25px;color:#3f78cb;letter-spacing:0.177px;">Configurations</span>
<div class="a" style="left:1394px;top:21px;width:40px;height:40px;background:#fff;border-radius:20px;"></div>
<svg class="a" style="left:1405.5px;top:32.5px;" width="17" height="17" viewBox="0 0 24 24" fill="none" stroke="#8a93a3" stroke-width="1.5" stroke-linecap="round" stroke-linejoin="round"><path d="M6 8a6 6 0 0 1 12 0c0 7 3 9 3 9H3s3-2 3-9"/><path d="M10.3 21a1.94 1.94 0 0 0 3.4 0"/></svg>
<div class="a" style="left:1415.3px;top:34.2px;width:5.6px;height:5.6px;background:#f4524d;border-radius:3px;"></div>
<div class="a" style="left:1442px;top:21px;width:40px;height:40px;background:#43c998;border-radius:20px;"></div>
<span class="t" style="left:1455.55px;top:35.00px;font-size:13.5px;color:#fff;font-weight:700;">IA</span>
<div class="a" style="left:1490px;top:20px;width:100px;height:42px;background:#fff;border-radius:8px;border:1px solid #d5dbe5;box-sizing:border-box;"></div>
<svg class="a" style="left:1499px;top:29px;" width="24" height="24" viewBox="0 0 24 24" fill="none" stroke="#2d3748" stroke-width="1.8" stroke-linecap="round" stroke-linejoin="round"><circle cx="12" cy="12" r="10"/><path d="M12 2a14.5 14.5 0 0 0 0 20 14.5 14.5 0 0 0 0-20"/><path d="M2 12h20"/></svg>
<span class="t" style="left:1528.00px;top:35.00px;font-size:13px;color:#1f2937;">FR</span>
<svg class="a" style="left:1557.5px;top:33.5px;" width="15" height="15" viewBox="0 0 24 24" fill="none" stroke="#2d3748" stroke-width="2" stroke-linecap="round" stroke-linejoin="round"><path d="m6 9 6 6 6-6"/></svg>
<div class="a" style="left:0px;top:928px;width:1677px;height:1px;background:#060606;"></div>
<div class="a" style="left:1638px;top:862px;width:60px;height:35.6px;background:#1f1f2b;border-radius:17.8px;box-shadow:0 0 40px 20px rgba(120,120,140,.06);"></div>
<svg class="a" style="left:1648.5px;top:871px" width="19.200" height="18" viewBox="0 0 19.200 18">
<defs><linearGradient id="bg1" gradientUnits="userSpaceOnUse" x1="1" y1="1" x2="17" y2="17"><stop offset="0.080" stop-color="#ff9a2e"/><stop offset=".3" stop-color="#f02fd6"/><stop offset=".6" stop-color="#a252f5"/><stop offset="1" stop-color="#3f8bff"/></linearGradient></defs>
<g fill="url(#bg1)">
<path d="M8.800 1.600C7.800 -0.100 4.700 -0.100 3.600 2C1.600 2.400 0.900 4.900 2 6.400C-0.100 7.500 -0.100 11 1.900 12C0.900 14 2.400 16.400 4.500 16.500C5.500 18.300 8 18.100 8.800 16.600Z"/>
<path d="M10.400 1.600C11.400 -0.100 14.500 -0.100 15.600 2C17.600 2.400 18.300 4.900 17.200 6.400C19.300 7.500 19.300 11 17.300 12C18.300 14 16.800 16.400 14.700 16.500C13.700 18.300 11.200 18.100 10.400 16.600Z"/>
</g>
<g fill="none" stroke="#1f1f2b" stroke-width="0.800" stroke-linecap="round" opacity=".75">
<path d="M3.200 9.200h4.800"/><path d="M4.300 5.200c.3-.9 1.200-1.300 2.500-1.200"/><path d="M4.300 13.200c.4.900 1.300 1.300 2.600 1.200"/>
<path d="M12.300 4.600l1.200-1.300 1.200 1.300"/><path d="M14.200 8.200l1.300 1.300 1.200-1.300"/><path d="M12.300 13.200l1.200 1.300 1.200-1.300"/>
</g>
</svg>
</body></html>
